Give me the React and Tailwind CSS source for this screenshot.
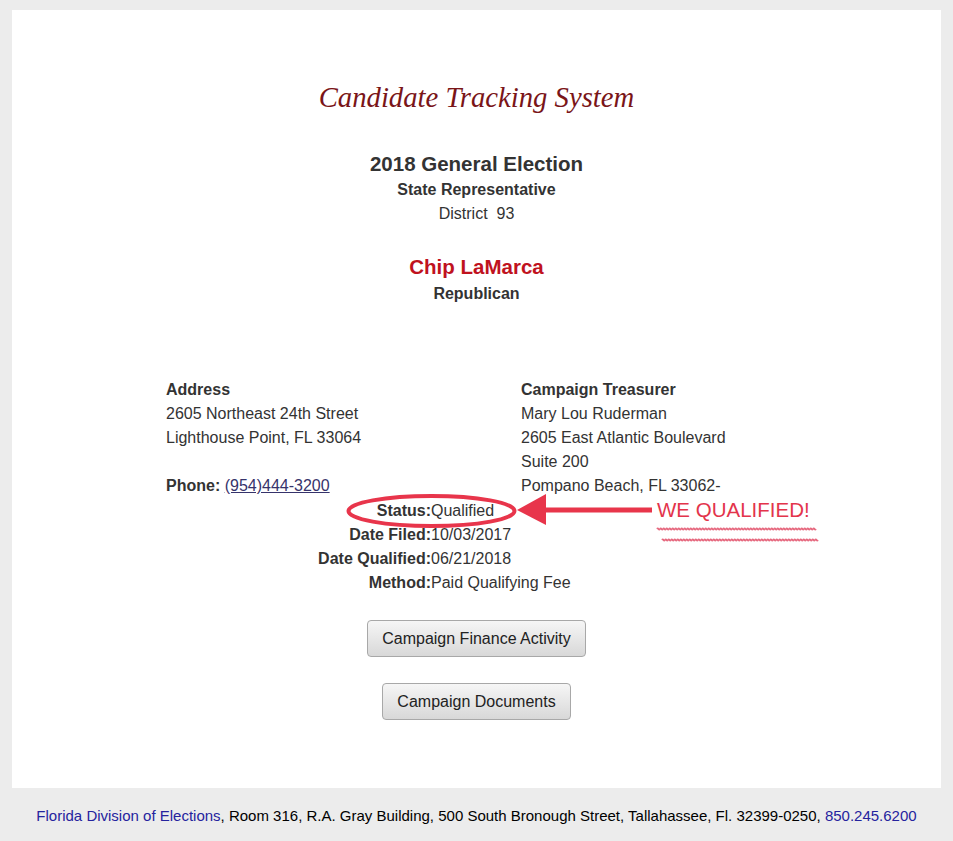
import React from "react";

const sans = { fontFamily: '"Liberation Sans", Arial, sans-serif' };

function Squiggle({ x1, x2, y }) {
  let d = `M ${x1} ${y}`;
  for (let x = x1; x < x2; x += 3) {
    d += ` Q ${x + 0.75} ${y - 1.3} ${x + 1.5} ${y} T ${x + 3} ${y}`;
  }
  return <path d={d} fill="none" stroke="#e2506a" strokeWidth="1.6" opacity="0.85" />;
}

export default function App() {
  return (
    <div className="min-h-[841px] w-[953px] bg-[#ececec] pt-[10px] text-[#333333]" style={sans}>
      <div className="relative ml-[12px] h-[778px] w-[929px] bg-white">
        <div className="flex flex-col items-center pt-[71px]">
          <div
            className="text-[28.7px] italic leading-[32px] text-[#7a1518]"
            style={{ fontFamily: '"Liberation Serif", "Times New Roman", serif' }}
          >
            Candidate Tracking System
          </div>
          <div className="mt-[39px] text-[20.5px] font-bold leading-[24px]">2018 General Election</div>
          <div className="mt-[2px] text-[16px] font-bold leading-[24px]">State Representative</div>
          <div className="text-[16px] leading-[24px]">District&nbsp; 93</div>
          <div className="mt-[29px] text-[20.5px] font-bold leading-[24px] text-[#c0121e]">Chip LaMarca</div>
          <div className="mt-[3px] text-[16px] font-bold leading-[24px]">Republican</div>
        </div>

        <div className="mt-[72px] pl-[154px] text-[16px] leading-[24px]">
          <div className="flex">
            <div className="w-[355px]">
              <div className="font-bold">Address</div>
              <div>2605 Northeast 24th Street</div>
              <div>Lighthouse Point, FL 33064</div>
              <div className="h-[24px]"></div>
              <div>
                <span className="font-bold">Phone:</span>{" "}
                <span className="text-[#36336b] underline">(954)444-3200</span>
              </div>
            </div>
            <div>
              <div className="font-bold">Campaign Treasurer</div>
              <div>Mary Lou Ruderman</div>
              <div>2605 East Atlantic Boulevard</div>
              <div>Suite 200</div>
              <div>Pompano Beach, FL 33062-</div>
            </div>
          </div>
          <div className="grid grid-cols-[265px_auto] pt-[1px]">
            <div className="text-right font-bold">Status:</div>
            <div>Qualified</div>
            <div className="text-right font-bold">Date Filed:</div>
            <div>10/03/2017</div>
            <div className="text-right font-bold">Date Qualified:</div>
            <div>06/21/2018</div>
            <div className="text-right font-bold">Method:</div>
            <div>Paid Qualifying Fee</div>
          </div>
        </div>

        <div className="mt-[25px] flex flex-col items-center gap-[26px]">
          <button className="h-[37px] rounded-[4px] border border-[#a8a8a8] bg-gradient-to-b from-[#f6f6f6] to-[#d8d8d8] px-[14px] text-[16px] text-[#222222]">
            Campaign Finance Activity
          </button>
          <button className="h-[37px] rounded-[4px] border border-[#a8a8a8] bg-gradient-to-b from-[#f6f6f6] to-[#d8d8d8] px-[14px] text-[16px] text-[#222222]">
            Campaign Documents
          </button>
        </div>

        <svg className="pointer-events-none absolute left-0 top-0" width="929" height="778">
          <ellipse cx="419.5" cy="501" rx="83" ry="15" fill="none" stroke="#e8354b" strokeWidth="4" />
          <rect x="530" y="497.5" width="110" height="5" fill="#e8354b" />
          <polygon points="505,500 534,484 534,515" fill="#e8354b" />
          <Squiggle x1={645} x2={803} y={519} />
          <Squiggle x1={650} x2={805} y={530} />
        </svg>
        <div className="absolute left-[645px] top-[490px] text-[20.5px] leading-none text-[#e3344b]">
          WE QUALIFIED!
        </div>
      </div>
      <div className="flex h-[53px] items-center justify-center pt-[3px] text-[15px] text-black">
        <span>
          <span className="text-[#25239e]">Florida Division of Elections</span>, Room 316, R.A. Gray Building, 500 South
          Bronough Street, Tallahassee, Fl. 32399-0250, <span className="text-[#25239e]">850.245.6200</span>
        </span>
      </div>
    </div>
  );
}
